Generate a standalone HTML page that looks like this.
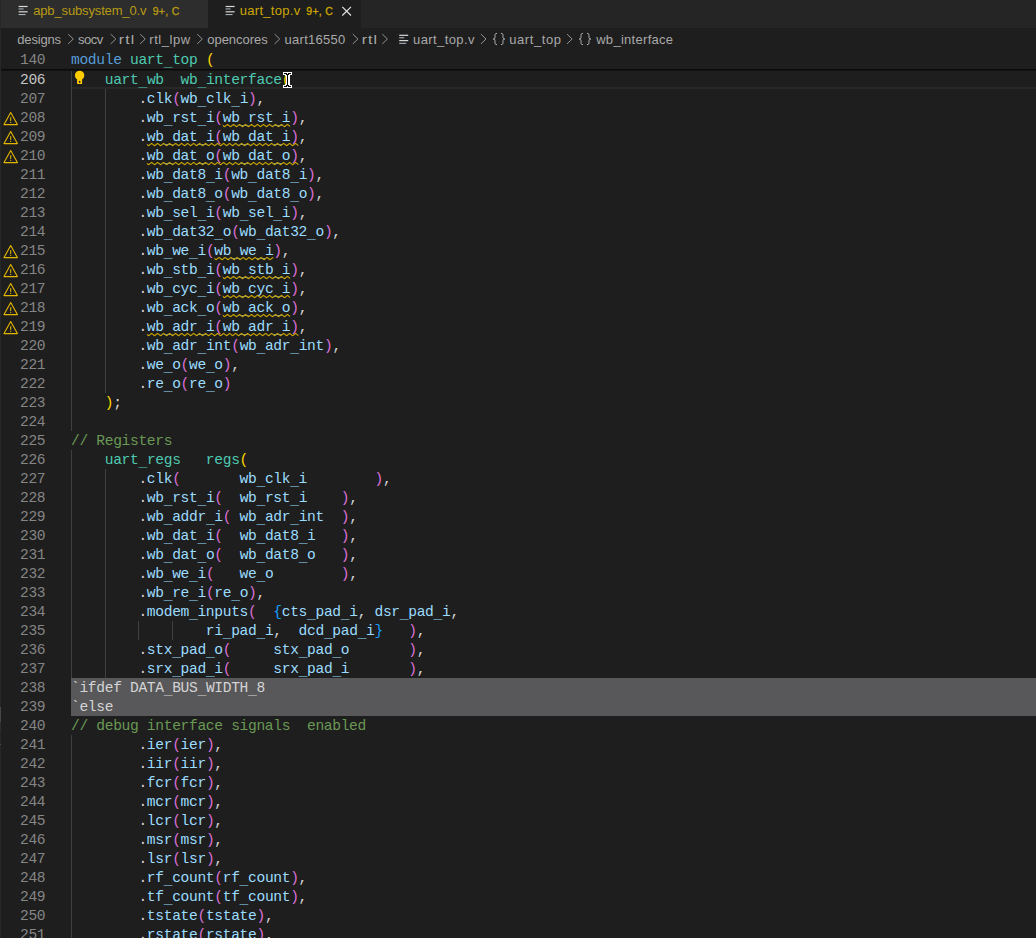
<!DOCTYPE html>
<html><head><meta charset="utf-8"><title>uart_top.v</title>
<style>
html,body{margin:0;padding:0;background:#1e1e1e;}
body{width:1036px;height:938px;overflow:hidden;position:relative;font-family:"Liberation Sans",sans-serif;}
.abs{position:absolute;}
.ui{font-family:"Liberation Sans",sans-serif;font-size:13px;white-space:pre;position:absolute;line-height:16px;}
.code{font-family:"Liberation Mono",monospace;font-size:14.6px;letter-spacing:-0.330px;white-space:pre;position:absolute;left:71px;height:19px;line-height:19px;color:#d4d4d4;}
.ln{font-family:"Liberation Mono",monospace;font-size:14.6px;letter-spacing:-0.330px;white-space:pre;position:absolute;left:0;width:45.3px;text-align:right;height:19px;line-height:19px;color:#858585;}
.g{position:absolute;width:1px;background:#404040;}
.code i{font-style:normal;position:relative;top:2px;}
</style></head><body>

<div class="abs" style="left:0;top:0;width:1036px;height:28px;background:#252526"></div>
<div class="abs" style="left:0;top:0;width:208px;height:28px;background:#2d2d2d"></div>
<div class="abs" style="left:208px;top:0;width:153px;height:28px;background:#1e1e1e"></div>
<div class="ui" style="left:33.20px;top:3px;font-size:13px;font-weight:normal;letter-spacing:-0.144px;color:#b79a14;">apb_subsystem_0.v</div>
<div class="ui" style="left:152.70px;top:3px;font-size:10.5px;font-weight:normal;letter-spacing:0.325px;color:#b79a14;-webkit-text-stroke:0.3px #b79a14;">9+, C</div>
<div class="ui" style="left:239.80px;top:3px;font-size:13px;font-weight:normal;letter-spacing:0.289px;color:#cca700;">uart_top.v</div>
<div class="ui" style="left:306.30px;top:3px;font-size:10.5px;font-weight:normal;letter-spacing:0.275px;color:#cca700;-webkit-text-stroke:0.3px #cca700;">9+, C</div>
<div class="ui" style="left:17.30px;top:32px;font-size:13px;font-weight:normal;letter-spacing:-0.183px;color:#a9a9a9;">designs</div>
<div class="ui" style="left:78.00px;top:32px;font-size:13px;font-weight:normal;letter-spacing:-0.467px;color:#a9a9a9;">socv</div>
<div class="ui" style="left:119.40px;top:32px;font-size:13px;font-weight:normal;letter-spacing:1.000px;color:#a9a9a9;transform:scaleX(1.200);transform-origin:1.00px 0;">rtl</div>
<div class="ui" style="left:149.30px;top:32px;font-size:13px;font-weight:normal;letter-spacing:0.533px;color:#a9a9a9;">rtl_lpw</div>
<div class="ui" style="left:207.30px;top:32px;font-size:13px;font-weight:normal;letter-spacing:-0.038px;color:#a9a9a9;">opencores</div>
<div class="ui" style="left:284.50px;top:32px;font-size:13px;font-weight:normal;letter-spacing:0.288px;color:#a9a9a9;">uart16550</div>
<div class="ui" style="left:361.70px;top:32px;font-size:13px;font-weight:normal;letter-spacing:0.917px;color:#a9a9a9;transform:scaleX(1.200);transform-origin:1.00px 0;">rtl</div>
<div class="ui" style="left:413.00px;top:32px;font-size:13px;font-weight:normal;letter-spacing:0.400px;color:#a9a9a9;">uart_top.v</div>
<div class="ui" style="left:509.20px;top:32px;font-size:13px;font-weight:normal;letter-spacing:0.586px;color:#a9a9a9;">uart_top</div>
<div class="ui" style="left:596.20px;top:32px;font-size:13px;font-weight:normal;letter-spacing:0.291px;color:#a9a9a9;">wb_interface</div>
<!--CRUMBS-->
<div class="ln" style="top:51px">140</div>
<div class="code" style="top:51px"><span style="color:#569cd6">module</span> <span style="color:#4ec9b0">uart<i>_</i>top</span> <span style="color:#ffd700">(</span></div>
<div class="abs" style="left:71px;top:70px;width:965px;height:19px;box-sizing:border-box;border-bottom:2px solid #282828"></div>
<div class="abs" style="left:71px;top:678px;width:965px;height:38px;background:#58585a"></div>
<div class="g" style="left:71px;top:70px;height:361px;background:#404040"></div>
<div class="g" style="left:105px;top:89px;height:304px;background:#404040"></div>
<div class="g" style="left:71px;top:450px;height:228px;background:#404040"></div>
<div class="g" style="left:105px;top:469px;height:209px;background:#404040"></div>
<div class="g" style="left:138px;top:621px;height:19px;background:#404040"></div>
<div class="g" style="left:172px;top:621px;height:19px;background:#404040"></div>
<div class="g" style="left:71px;top:735px;height:228px;background:#404040"></div>
<div class="ln" style="top:71px;color:#c6c6c6">206</div>
<div class="code" style="top:71px">    <span style="color:#4ec9b0">uart<i>_</i>wb  wb<i>_</i>interface</span><span style="color:#ffd700">(</span></div>
<div class="ln" style="top:90px;color:#858585">207</div>
<div class="code" style="top:90px">        <span style="color:#d4d4d4">.</span><span style="color:#9cdcfe">clk</span><span style="color:#da70d6">(</span><span style="color:#9cdcfe">wb<i>_</i>clk<i>_</i>i</span><span style="color:#da70d6">)</span><span style="color:#d4d4d4">,</span></div>
<div class="ln" style="top:109px;color:#858585">208</div>
<div class="code" style="top:109px">        <span style="color:#d4d4d4">.</span><span style="color:#9cdcfe">wb<i>_</i>rst<i>_</i>i</span><span style="color:#da70d6">(</span><span style="color:#9cdcfe">wb<i>_</i>rst<i>_</i>i</span><span style="color:#da70d6">)</span><span style="color:#d4d4d4">,</span></div>
<div class="ln" style="top:128px;color:#858585">209</div>
<div class="code" style="top:128px">        <span style="color:#d4d4d4">.</span><span style="color:#9cdcfe">wb<i>_</i>dat<i>_</i>i</span><span style="color:#da70d6">(</span><span style="color:#9cdcfe">wb<i>_</i>dat<i>_</i>i</span><span style="color:#da70d6">)</span><span style="color:#d4d4d4">,</span></div>
<div class="ln" style="top:147px;color:#858585">210</div>
<div class="code" style="top:147px">        <span style="color:#d4d4d4">.</span><span style="color:#9cdcfe">wb<i>_</i>dat<i>_</i>o</span><span style="color:#da70d6">(</span><span style="color:#9cdcfe">wb<i>_</i>dat<i>_</i>o</span><span style="color:#da70d6">)</span><span style="color:#d4d4d4">,</span></div>
<div class="ln" style="top:166px;color:#858585">211</div>
<div class="code" style="top:166px">        <span style="color:#d4d4d4">.</span><span style="color:#9cdcfe">wb<i>_</i>dat8<i>_</i>i</span><span style="color:#da70d6">(</span><span style="color:#9cdcfe">wb<i>_</i>dat8<i>_</i>i</span><span style="color:#da70d6">)</span><span style="color:#d4d4d4">,</span></div>
<div class="ln" style="top:185px;color:#858585">212</div>
<div class="code" style="top:185px">        <span style="color:#d4d4d4">.</span><span style="color:#9cdcfe">wb<i>_</i>dat8<i>_</i>o</span><span style="color:#da70d6">(</span><span style="color:#9cdcfe">wb<i>_</i>dat8<i>_</i>o</span><span style="color:#da70d6">)</span><span style="color:#d4d4d4">,</span></div>
<div class="ln" style="top:204px;color:#858585">213</div>
<div class="code" style="top:204px">        <span style="color:#d4d4d4">.</span><span style="color:#9cdcfe">wb<i>_</i>sel<i>_</i>i</span><span style="color:#da70d6">(</span><span style="color:#9cdcfe">wb<i>_</i>sel<i>_</i>i</span><span style="color:#da70d6">)</span><span style="color:#d4d4d4">,</span></div>
<div class="ln" style="top:223px;color:#858585">214</div>
<div class="code" style="top:223px">        <span style="color:#d4d4d4">.</span><span style="color:#9cdcfe">wb<i>_</i>dat32<i>_</i>o</span><span style="color:#da70d6">(</span><span style="color:#9cdcfe">wb<i>_</i>dat32<i>_</i>o</span><span style="color:#da70d6">)</span><span style="color:#d4d4d4">,</span></div>
<div class="ln" style="top:242px;color:#858585">215</div>
<div class="code" style="top:242px">        <span style="color:#d4d4d4">.</span><span style="color:#9cdcfe">wb<i>_</i>we<i>_</i>i</span><span style="color:#da70d6">(</span><span style="color:#9cdcfe">wb<i>_</i>we<i>_</i>i</span><span style="color:#da70d6">)</span><span style="color:#d4d4d4">,</span></div>
<div class="ln" style="top:261px;color:#858585">216</div>
<div class="code" style="top:261px">        <span style="color:#d4d4d4">.</span><span style="color:#9cdcfe">wb<i>_</i>stb<i>_</i>i</span><span style="color:#da70d6">(</span><span style="color:#9cdcfe">wb<i>_</i>stb<i>_</i>i</span><span style="color:#da70d6">)</span><span style="color:#d4d4d4">,</span></div>
<div class="ln" style="top:280px;color:#858585">217</div>
<div class="code" style="top:280px">        <span style="color:#d4d4d4">.</span><span style="color:#9cdcfe">wb<i>_</i>cyc<i>_</i>i</span><span style="color:#da70d6">(</span><span style="color:#9cdcfe">wb<i>_</i>cyc<i>_</i>i</span><span style="color:#da70d6">)</span><span style="color:#d4d4d4">,</span></div>
<div class="ln" style="top:299px;color:#858585">218</div>
<div class="code" style="top:299px">        <span style="color:#d4d4d4">.</span><span style="color:#9cdcfe">wb<i>_</i>ack<i>_</i>o</span><span style="color:#da70d6">(</span><span style="color:#9cdcfe">wb<i>_</i>ack<i>_</i>o</span><span style="color:#da70d6">)</span><span style="color:#d4d4d4">,</span></div>
<div class="ln" style="top:318px;color:#858585">219</div>
<div class="code" style="top:318px">        <span style="color:#d4d4d4">.</span><span style="color:#9cdcfe">wb<i>_</i>adr<i>_</i>i</span><span style="color:#da70d6">(</span><span style="color:#9cdcfe">wb<i>_</i>adr<i>_</i>i</span><span style="color:#da70d6">)</span><span style="color:#d4d4d4">,</span></div>
<div class="ln" style="top:337px;color:#858585">220</div>
<div class="code" style="top:337px">        <span style="color:#d4d4d4">.</span><span style="color:#9cdcfe">wb<i>_</i>adr<i>_</i>int</span><span style="color:#da70d6">(</span><span style="color:#9cdcfe">wb<i>_</i>adr<i>_</i>int</span><span style="color:#da70d6">)</span><span style="color:#d4d4d4">,</span></div>
<div class="ln" style="top:356px;color:#858585">221</div>
<div class="code" style="top:356px">        <span style="color:#d4d4d4">.</span><span style="color:#9cdcfe">we<i>_</i>o</span><span style="color:#da70d6">(</span><span style="color:#9cdcfe">we<i>_</i>o</span><span style="color:#da70d6">)</span><span style="color:#d4d4d4">,</span></div>
<div class="ln" style="top:375px;color:#858585">222</div>
<div class="code" style="top:375px">        <span style="color:#d4d4d4">.</span><span style="color:#9cdcfe">re<i>_</i>o</span><span style="color:#da70d6">(</span><span style="color:#9cdcfe">re<i>_</i>o</span><span style="color:#da70d6">)</span></div>
<div class="ln" style="top:394px;color:#858585">223</div>
<div class="code" style="top:394px">    <span style="color:#ffd700">)</span><span style="color:#d4d4d4">;</span></div>
<div class="ln" style="top:413px;color:#858585">224</div>
<div class="ln" style="top:432px;color:#858585">225</div>
<div class="code" style="top:432px"><span style="color:#6a9955">// Registers</span></div>
<div class="ln" style="top:451px;color:#858585">226</div>
<div class="code" style="top:451px">    <span style="color:#4ec9b0">uart<i>_</i>regs   regs</span><span style="color:#ffd700">(</span></div>
<div class="ln" style="top:470px;color:#858585">227</div>
<div class="code" style="top:470px">        <span style="color:#d4d4d4">.</span><span style="color:#9cdcfe">clk</span><span style="color:#da70d6">(       </span><span style="color:#9cdcfe">wb<i>_</i>clk<i>_</i>i        </span><span style="color:#da70d6">)</span><span style="color:#d4d4d4">,</span></div>
<div class="ln" style="top:489px;color:#858585">228</div>
<div class="code" style="top:489px">        <span style="color:#d4d4d4">.</span><span style="color:#9cdcfe">wb<i>_</i>rst<i>_</i>i</span><span style="color:#da70d6">(  </span><span style="color:#9cdcfe">wb<i>_</i>rst<i>_</i>i    </span><span style="color:#da70d6">)</span><span style="color:#d4d4d4">,</span></div>
<div class="ln" style="top:508px;color:#858585">229</div>
<div class="code" style="top:508px">        <span style="color:#d4d4d4">.</span><span style="color:#9cdcfe">wb<i>_</i>addr<i>_</i>i</span><span style="color:#da70d6">( </span><span style="color:#9cdcfe">wb<i>_</i>adr<i>_</i>int  </span><span style="color:#da70d6">)</span><span style="color:#d4d4d4">,</span></div>
<div class="ln" style="top:527px;color:#858585">230</div>
<div class="code" style="top:527px">        <span style="color:#d4d4d4">.</span><span style="color:#9cdcfe">wb<i>_</i>dat<i>_</i>i</span><span style="color:#da70d6">(  </span><span style="color:#9cdcfe">wb<i>_</i>dat8<i>_</i>i   </span><span style="color:#da70d6">)</span><span style="color:#d4d4d4">,</span></div>
<div class="ln" style="top:546px;color:#858585">231</div>
<div class="code" style="top:546px">        <span style="color:#d4d4d4">.</span><span style="color:#9cdcfe">wb<i>_</i>dat<i>_</i>o</span><span style="color:#da70d6">(  </span><span style="color:#9cdcfe">wb<i>_</i>dat8<i>_</i>o   </span><span style="color:#da70d6">)</span><span style="color:#d4d4d4">,</span></div>
<div class="ln" style="top:565px;color:#858585">232</div>
<div class="code" style="top:565px">        <span style="color:#d4d4d4">.</span><span style="color:#9cdcfe">wb<i>_</i>we<i>_</i>i</span><span style="color:#da70d6">(   </span><span style="color:#9cdcfe">we<i>_</i>o        </span><span style="color:#da70d6">)</span><span style="color:#d4d4d4">,</span></div>
<div class="ln" style="top:584px;color:#858585">233</div>
<div class="code" style="top:584px">        <span style="color:#d4d4d4">.</span><span style="color:#9cdcfe">wb<i>_</i>re<i>_</i>i</span><span style="color:#da70d6">(</span><span style="color:#9cdcfe">re<i>_</i>o</span><span style="color:#da70d6">)</span><span style="color:#d4d4d4">,</span></div>
<div class="ln" style="top:603px;color:#858585">234</div>
<div class="code" style="top:603px">        <span style="color:#d4d4d4">.</span><span style="color:#9cdcfe">modem<i>_</i>inputs</span><span style="color:#da70d6">(  </span><span style="color:#179fff">{</span><span style="color:#9cdcfe">cts<i>_</i>pad<i>_</i>i</span><span style="color:#d4d4d4">, </span><span style="color:#9cdcfe">dsr<i>_</i>pad<i>_</i>i</span><span style="color:#d4d4d4">,</span></div>
<div class="ln" style="top:622px;color:#858585">235</div>
<div class="code" style="top:622px">                <span style="color:#9cdcfe">ri<i>_</i>pad<i>_</i>i</span><span style="color:#d4d4d4">,  </span><span style="color:#9cdcfe">dcd<i>_</i>pad<i>_</i>i</span><span style="color:#179fff">}   </span><span style="color:#da70d6">)</span><span style="color:#d4d4d4">,</span></div>
<div class="ln" style="top:641px;color:#858585">236</div>
<div class="code" style="top:641px">        <span style="color:#d4d4d4">.</span><span style="color:#9cdcfe">stx<i>_</i>pad<i>_</i>o</span><span style="color:#da70d6">(     </span><span style="color:#9cdcfe">stx<i>_</i>pad<i>_</i>o       </span><span style="color:#da70d6">)</span><span style="color:#d4d4d4">,</span></div>
<div class="ln" style="top:660px;color:#858585">237</div>
<div class="code" style="top:660px">        <span style="color:#d4d4d4">.</span><span style="color:#9cdcfe">srx<i>_</i>pad<i>_</i>i</span><span style="color:#da70d6">(     </span><span style="color:#9cdcfe">srx<i>_</i>pad<i>_</i>i       </span><span style="color:#da70d6">)</span><span style="color:#d4d4d4">,</span></div>
<div class="ln" style="top:679px;color:#858585">238</div>
<div class="code" style="top:679px"><span style="color:#d4d4d4">`ifdef DATA<i>_</i>BUS<i>_</i>WIDTH<i>_</i>8</span></div>
<div class="ln" style="top:698px;color:#858585">239</div>
<div class="code" style="top:698px"><span style="color:#d4d4d4">`else</span></div>
<div class="ln" style="top:717px;color:#858585">240</div>
<div class="code" style="top:717px"><span style="color:#6a9955">// debug interface signals  enabled</span></div>
<div class="ln" style="top:736px;color:#858585">241</div>
<div class="code" style="top:736px">        <span style="color:#d4d4d4">.</span><span style="color:#9cdcfe">ier</span><span style="color:#da70d6">(</span><span style="color:#9cdcfe">ier</span><span style="color:#da70d6">)</span><span style="color:#d4d4d4">,</span></div>
<div class="ln" style="top:755px;color:#858585">242</div>
<div class="code" style="top:755px">        <span style="color:#d4d4d4">.</span><span style="color:#9cdcfe">iir</span><span style="color:#da70d6">(</span><span style="color:#9cdcfe">iir</span><span style="color:#da70d6">)</span><span style="color:#d4d4d4">,</span></div>
<div class="ln" style="top:774px;color:#858585">243</div>
<div class="code" style="top:774px">        <span style="color:#d4d4d4">.</span><span style="color:#9cdcfe">fcr</span><span style="color:#da70d6">(</span><span style="color:#9cdcfe">fcr</span><span style="color:#da70d6">)</span><span style="color:#d4d4d4">,</span></div>
<div class="ln" style="top:793px;color:#858585">244</div>
<div class="code" style="top:793px">        <span style="color:#d4d4d4">.</span><span style="color:#9cdcfe">mcr</span><span style="color:#da70d6">(</span><span style="color:#9cdcfe">mcr</span><span style="color:#da70d6">)</span><span style="color:#d4d4d4">,</span></div>
<div class="ln" style="top:812px;color:#858585">245</div>
<div class="code" style="top:812px">        <span style="color:#d4d4d4">.</span><span style="color:#9cdcfe">lcr</span><span style="color:#da70d6">(</span><span style="color:#9cdcfe">lcr</span><span style="color:#da70d6">)</span><span style="color:#d4d4d4">,</span></div>
<div class="ln" style="top:831px;color:#858585">246</div>
<div class="code" style="top:831px">        <span style="color:#d4d4d4">.</span><span style="color:#9cdcfe">msr</span><span style="color:#da70d6">(</span><span style="color:#9cdcfe">msr</span><span style="color:#da70d6">)</span><span style="color:#d4d4d4">,</span></div>
<div class="ln" style="top:850px;color:#858585">247</div>
<div class="code" style="top:850px">        <span style="color:#d4d4d4">.</span><span style="color:#9cdcfe">lsr</span><span style="color:#da70d6">(</span><span style="color:#9cdcfe">lsr</span><span style="color:#da70d6">)</span><span style="color:#d4d4d4">,</span></div>
<div class="ln" style="top:869px;color:#858585">248</div>
<div class="code" style="top:869px">        <span style="color:#d4d4d4">.</span><span style="color:#9cdcfe">rf<i>_</i>count</span><span style="color:#da70d6">(</span><span style="color:#9cdcfe">rf<i>_</i>count</span><span style="color:#da70d6">)</span><span style="color:#d4d4d4">,</span></div>
<div class="ln" style="top:888px;color:#858585">249</div>
<div class="code" style="top:888px">        <span style="color:#d4d4d4">.</span><span style="color:#9cdcfe">tf<i>_</i>count</span><span style="color:#da70d6">(</span><span style="color:#9cdcfe">tf<i>_</i>count</span><span style="color:#da70d6">)</span><span style="color:#d4d4d4">,</span></div>
<div class="ln" style="top:907px;color:#858585">250</div>
<div class="code" style="top:907px">        <span style="color:#d4d4d4">.</span><span style="color:#9cdcfe">tstate</span><span style="color:#da70d6">(</span><span style="color:#9cdcfe">tstate</span><span style="color:#da70d6">)</span><span style="color:#d4d4d4">,</span></div>
<div class="ln" style="top:926px;color:#858585">251</div>
<div class="code" style="top:926px">        <span style="color:#d4d4d4">.</span><span style="color:#9cdcfe">rstate</span><span style="color:#da70d6">(</span><span style="color:#9cdcfe">rstate</span><span style="color:#da70d6">)</span><span style="color:#d4d4d4">,</span></div>
<div class="abs" style="left:0;top:69px;width:1036px;height:1px;background:#0a0a0a"></div><div class="abs" style="left:0;top:70px;width:1036px;height:1px;background:#131313"></div>
<div class="abs" style="left:0;top:0;width:1px;height:938px;background:#272727"></div><div class="abs" style="left:0;top:707px;width:1px;height:15px;background:#474747"></div><div class="abs" style="left:0;top:722px;width:1px;height:9px;background:#2d2d2d"></div><div class="abs" style="left:0;top:744px;width:1px;height:1px;background:#484848"></div>
<svg class="abs" style="left:0;top:0" width="1036" height="938" viewBox="0 0 1036 938" shape-rendering="auto">
<clipPath id="c208"><rect x="0" y="-0.5" width="67.44" height="4"/></clipPath>
<g transform="translate(222.74,124)" clip-path="url(#c208)"><path d="M-1.25,0.35 L1.75,2.75 L4.75,0.35 L7.75,2.75 L10.75,0.35 L13.75,2.75 L16.75,0.35 L19.75,2.75 L22.75,0.35 L25.75,2.75 L28.75,0.35 L31.75,2.75 L34.75,0.35 L37.75,2.75 L40.75,0.35 L43.75,2.75 L46.75,0.35 L49.75,2.75 L52.75,0.35 L55.75,2.75 L58.75,0.35 L61.75,2.75 L64.75,0.35 L67.75,2.75" fill="none" stroke="#cca700" stroke-width="1.05"/></g>
<clipPath id="c209"><rect x="0" y="-0.5" width="151.74" height="4"/></clipPath>
<g transform="translate(146.87,143)" clip-path="url(#c209)"><path d="M-1.25,0.35 L1.75,2.75 L4.75,0.35 L7.75,2.75 L10.75,0.35 L13.75,2.75 L16.75,0.35 L19.75,2.75 L22.75,0.35 L25.75,2.75 L28.75,0.35 L31.75,2.75 L34.75,0.35 L37.75,2.75 L40.75,0.35 L43.75,2.75 L46.75,0.35 L49.75,2.75 L52.75,0.35 L55.75,2.75 L58.75,0.35 L61.75,2.75 L64.75,0.35 L67.75,2.75 L70.75,0.35 L73.75,2.75 L76.75,0.35 L79.75,2.75 L82.75,0.35 L85.75,2.75 L88.75,0.35 L91.75,2.75 L94.75,0.35 L97.75,2.75 L100.75,0.35 L103.75,2.75 L106.75,0.35 L109.75,2.75 L112.75,0.35 L115.75,2.75 L118.75,0.35 L121.75,2.75 L124.75,0.35 L127.75,2.75 L130.75,0.35 L133.75,2.75 L136.75,0.35 L139.75,2.75 L142.75,0.35 L145.75,2.75 L148.75,0.35 L151.75,2.75" fill="none" stroke="#cca700" stroke-width="1.05"/></g>
<clipPath id="c210"><rect x="0" y="-0.5" width="151.74" height="4"/></clipPath>
<g transform="translate(146.87,162)" clip-path="url(#c210)"><path d="M-1.25,0.35 L1.75,2.75 L4.75,0.35 L7.75,2.75 L10.75,0.35 L13.75,2.75 L16.75,0.35 L19.75,2.75 L22.75,0.35 L25.75,2.75 L28.75,0.35 L31.75,2.75 L34.75,0.35 L37.75,2.75 L40.75,0.35 L43.75,2.75 L46.75,0.35 L49.75,2.75 L52.75,0.35 L55.75,2.75 L58.75,0.35 L61.75,2.75 L64.75,0.35 L67.75,2.75 L70.75,0.35 L73.75,2.75 L76.75,0.35 L79.75,2.75 L82.75,0.35 L85.75,2.75 L88.75,0.35 L91.75,2.75 L94.75,0.35 L97.75,2.75 L100.75,0.35 L103.75,2.75 L106.75,0.35 L109.75,2.75 L112.75,0.35 L115.75,2.75 L118.75,0.35 L121.75,2.75 L124.75,0.35 L127.75,2.75 L130.75,0.35 L133.75,2.75 L136.75,0.35 L139.75,2.75 L142.75,0.35 L145.75,2.75 L148.75,0.35 L151.75,2.75" fill="none" stroke="#cca700" stroke-width="1.05"/></g>
<clipPath id="c215"><rect x="0" y="-0.5" width="59.01" height="4"/></clipPath>
<g transform="translate(214.31,257)" clip-path="url(#c215)"><path d="M-1.25,0.35 L1.75,2.75 L4.75,0.35 L7.75,2.75 L10.75,0.35 L13.75,2.75 L16.75,0.35 L19.75,2.75 L22.75,0.35 L25.75,2.75 L28.75,0.35 L31.75,2.75 L34.75,0.35 L37.75,2.75 L40.75,0.35 L43.75,2.75 L46.75,0.35 L49.75,2.75 L52.75,0.35 L55.75,2.75 L58.75,0.35 L61.75,2.75" fill="none" stroke="#cca700" stroke-width="1.05"/></g>
<clipPath id="c216"><rect x="0" y="-0.5" width="67.44" height="4"/></clipPath>
<g transform="translate(222.74,276)" clip-path="url(#c216)"><path d="M-1.25,0.35 L1.75,2.75 L4.75,0.35 L7.75,2.75 L10.75,0.35 L13.75,2.75 L16.75,0.35 L19.75,2.75 L22.75,0.35 L25.75,2.75 L28.75,0.35 L31.75,2.75 L34.75,0.35 L37.75,2.75 L40.75,0.35 L43.75,2.75 L46.75,0.35 L49.75,2.75 L52.75,0.35 L55.75,2.75 L58.75,0.35 L61.75,2.75 L64.75,0.35 L67.75,2.75" fill="none" stroke="#cca700" stroke-width="1.05"/></g>
<clipPath id="c217"><rect x="0" y="-0.5" width="67.44" height="4"/></clipPath>
<g transform="translate(222.74,295)" clip-path="url(#c217)"><path d="M-1.25,0.35 L1.75,2.75 L4.75,0.35 L7.75,2.75 L10.75,0.35 L13.75,2.75 L16.75,0.35 L19.75,2.75 L22.75,0.35 L25.75,2.75 L28.75,0.35 L31.75,2.75 L34.75,0.35 L37.75,2.75 L40.75,0.35 L43.75,2.75 L46.75,0.35 L49.75,2.75 L52.75,0.35 L55.75,2.75 L58.75,0.35 L61.75,2.75 L64.75,0.35 L67.75,2.75" fill="none" stroke="#cca700" stroke-width="1.05"/></g>
<clipPath id="c218"><rect x="0" y="-0.5" width="67.44" height="4"/></clipPath>
<g transform="translate(222.74,314)" clip-path="url(#c218)"><path d="M-1.25,0.35 L1.75,2.75 L4.75,0.35 L7.75,2.75 L10.75,0.35 L13.75,2.75 L16.75,0.35 L19.75,2.75 L22.75,0.35 L25.75,2.75 L28.75,0.35 L31.75,2.75 L34.75,0.35 L37.75,2.75 L40.75,0.35 L43.75,2.75 L46.75,0.35 L49.75,2.75 L52.75,0.35 L55.75,2.75 L58.75,0.35 L61.75,2.75 L64.75,0.35 L67.75,2.75" fill="none" stroke="#cca700" stroke-width="1.05"/></g>
<clipPath id="c219"><rect x="0" y="-0.5" width="151.74" height="4"/></clipPath>
<g transform="translate(146.87,333)" clip-path="url(#c219)"><path d="M-1.25,0.35 L1.75,2.75 L4.75,0.35 L7.75,2.75 L10.75,0.35 L13.75,2.75 L16.75,0.35 L19.75,2.75 L22.75,0.35 L25.75,2.75 L28.75,0.35 L31.75,2.75 L34.75,0.35 L37.75,2.75 L40.75,0.35 L43.75,2.75 L46.75,0.35 L49.75,2.75 L52.75,0.35 L55.75,2.75 L58.75,0.35 L61.75,2.75 L64.75,0.35 L67.75,2.75 L70.75,0.35 L73.75,2.75 L76.75,0.35 L79.75,2.75 L82.75,0.35 L85.75,2.75 L88.75,0.35 L91.75,2.75 L94.75,0.35 L97.75,2.75 L100.75,0.35 L103.75,2.75 L106.75,0.35 L109.75,2.75 L112.75,0.35 L115.75,2.75 L118.75,0.35 L121.75,2.75 L124.75,0.35 L127.75,2.75 L130.75,0.35 L133.75,2.75 L136.75,0.35 L139.75,2.75 L142.75,0.35 L145.75,2.75 L148.75,0.35 L151.75,2.75" fill="none" stroke="#cca700" stroke-width="1.05"/></g>
<g transform="translate(0,108)" fill="none" stroke="#e3b600" stroke-width="1.1" stroke-linejoin="round" stroke-linecap="round"><path d="M10.7,4.6 L17.4,16.6 L4.0,16.6 Z"/><path d="M10.7,9.4 L10.7,12.6" stroke-width="1.05"/><path d="M10.7,14.3 L10.7,14.5" stroke-width="1.1"/></g>
<g transform="translate(0,127)" fill="none" stroke="#e3b600" stroke-width="1.1" stroke-linejoin="round" stroke-linecap="round"><path d="M10.7,4.6 L17.4,16.6 L4.0,16.6 Z"/><path d="M10.7,9.4 L10.7,12.6" stroke-width="1.05"/><path d="M10.7,14.3 L10.7,14.5" stroke-width="1.1"/></g>
<g transform="translate(0,146)" fill="none" stroke="#e3b600" stroke-width="1.1" stroke-linejoin="round" stroke-linecap="round"><path d="M10.7,4.6 L17.4,16.6 L4.0,16.6 Z"/><path d="M10.7,9.4 L10.7,12.6" stroke-width="1.05"/><path d="M10.7,14.3 L10.7,14.5" stroke-width="1.1"/></g>
<g transform="translate(0,241)" fill="none" stroke="#e3b600" stroke-width="1.1" stroke-linejoin="round" stroke-linecap="round"><path d="M10.7,4.6 L17.4,16.6 L4.0,16.6 Z"/><path d="M10.7,9.4 L10.7,12.6" stroke-width="1.05"/><path d="M10.7,14.3 L10.7,14.5" stroke-width="1.1"/></g>
<g transform="translate(0,260)" fill="none" stroke="#e3b600" stroke-width="1.1" stroke-linejoin="round" stroke-linecap="round"><path d="M10.7,4.6 L17.4,16.6 L4.0,16.6 Z"/><path d="M10.7,9.4 L10.7,12.6" stroke-width="1.05"/><path d="M10.7,14.3 L10.7,14.5" stroke-width="1.1"/></g>
<g transform="translate(0,279)" fill="none" stroke="#e3b600" stroke-width="1.1" stroke-linejoin="round" stroke-linecap="round"><path d="M10.7,4.6 L17.4,16.6 L4.0,16.6 Z"/><path d="M10.7,9.4 L10.7,12.6" stroke-width="1.05"/><path d="M10.7,14.3 L10.7,14.5" stroke-width="1.1"/></g>
<g transform="translate(0,298)" fill="none" stroke="#e3b600" stroke-width="1.1" stroke-linejoin="round" stroke-linecap="round"><path d="M10.7,4.6 L17.4,16.6 L4.0,16.6 Z"/><path d="M10.7,9.4 L10.7,12.6" stroke-width="1.05"/><path d="M10.7,14.3 L10.7,14.5" stroke-width="1.1"/></g>
<g transform="translate(0,317)" fill="none" stroke="#e3b600" stroke-width="1.1" stroke-linejoin="round" stroke-linecap="round"><path d="M10.7,4.6 L17.4,16.6 L4.0,16.6 Z"/><path d="M10.7,9.4 L10.7,12.6" stroke-width="1.05"/><path d="M10.7,14.3 L10.7,14.5" stroke-width="1.1"/></g>
<g transform="translate(18.60,5.90)"><rect x="0" y="0" width="9" height="1.2" fill="#d8d8d8"/><rect x="0" y="2.5" width="5" height="1.1" fill="#a8b0b8"/><rect x="0" y="5.3" width="9" height="1.2" fill="#d8d8d8"/><rect x="0" y="8.1" width="7" height="1.1" fill="#a8b0b8"/></g>
<g transform="translate(225.60,5.90)"><rect x="0" y="0" width="9" height="1.2" fill="#d8d8d8"/><rect x="0" y="2.5" width="5" height="1.1" fill="#a8b0b8"/><rect x="0" y="5.3" width="9" height="1.2" fill="#d8d8d8"/><rect x="0" y="8.1" width="7" height="1.1" fill="#a8b0b8"/></g>
<g transform="translate(399.20,34.70)"><rect x="0" y="0" width="9" height="1.2" fill="#d8d8d8"/><rect x="0" y="2.5" width="5" height="1.1" fill="#a8b0b8"/><rect x="0" y="5.3" width="9" height="1.2" fill="#d8d8d8"/><rect x="0" y="8.1" width="7" height="1.1" fill="#a8b0b8"/></g>
<path d="M342.3,6.8 L351,15.5 M351,6.8 L342.3,15.5" stroke="#e8e8e8" stroke-width="1.1" fill="none"/>
<path d="M68.20,34.1 L73.30,39 L68.20,43.9" stroke="#939393" stroke-width="1.0" fill="none"/>
<path d="M110.70,34.1 L115.80,39 L110.70,43.9" stroke="#939393" stroke-width="1.0" fill="none"/>
<path d="M140.20,34.1 L145.30,39 L140.20,43.9" stroke="#939393" stroke-width="1.0" fill="none"/>
<path d="M197.20,34.1 L202.30,39 L197.20,43.9" stroke="#939393" stroke-width="1.0" fill="none"/>
<path d="M274.60,34.1 L279.70,39 L274.60,43.9" stroke="#939393" stroke-width="1.0" fill="none"/>
<path d="M352.80,34.1 L357.90,39 L352.80,43.9" stroke="#939393" stroke-width="1.0" fill="none"/>
<path d="M382.30,34.1 L387.40,39 L382.30,43.9" stroke="#939393" stroke-width="1.0" fill="none"/>
<path d="M480.90,34.1 L486.00,39 L480.90,43.9" stroke="#939393" stroke-width="1.0" fill="none"/>
<path d="M567.00,34.1 L572.10,39 L567.00,43.9" stroke="#939393" stroke-width="1.0" fill="none"/>
<g transform="translate(492.80,0)" stroke="#b8b8b8" stroke-width="0.95" fill="none"><path d="M4.2,33.4 C2.6,33.4 2.2,34 2.2,35.4 L2.2,37.4 C2.2,38.5 1.6,39 0.4,39 C1.6,39 2.2,39.5 2.2,40.6 L2.2,42.6 C2.2,44 2.6,44.6 4.2,44.6"/><path d="M8.2,33.4 C9.8,33.4 10.2,34 10.2,35.4 L10.2,37.4 C10.2,38.5 10.8,39 12,39 C10.8,39 10.2,39.5 10.2,40.6 L10.2,42.6 C10.2,44 9.8,44.6 8.2,44.6"/></g>
<g transform="translate(578.80,0)" stroke="#b8b8b8" stroke-width="0.95" fill="none"><path d="M4.2,33.4 C2.6,33.4 2.2,34 2.2,35.4 L2.2,37.4 C2.2,38.5 1.6,39 0.4,39 C1.6,39 2.2,39.5 2.2,40.6 L2.2,42.6 C2.2,44 2.6,44.6 4.2,44.6"/><path d="M8.2,33.4 C9.8,33.4 10.2,34 10.2,35.4 L10.2,37.4 C10.2,38.5 10.8,39 12,39 C10.8,39 10.2,39.5 10.2,40.6 L10.2,42.6 C10.2,44 9.8,44.6 8.2,44.6"/></g>
<g fill="#ffcc00"><circle cx="79.6" cy="75.4" r="4.7"/><path d="M77.1,78 L82.1,78 L82.1,83.2 Q82.1,84.1 81.2,84.1 L78,84.1 Q77.1,84.1 77.1,83.2 Z"/></g>
<rect x="78.9" y="80.9" width="1.5" height="1.9" fill="#1e1e1e"/>
<g shape-rendering="crispEdges"><path d="M283,72 H292 V75 H290 V76 H289.5 V84 H290 V85 H292 V88 H283 V85 H285 V84 H286 V76 H285 V75 H283 Z" fill="#ffffff"/><rect x="284" y="73" width="7" height="1" fill="#000"/><rect x="287" y="73" width="1" height="1" fill="#fff"/><rect x="286" y="74" width="3" height="1" fill="#000"/><rect x="287" y="75" width="1" height="10" fill="#000"/><rect x="286" y="85" width="3" height="1" fill="#000"/><rect x="284" y="86" width="7" height="1" fill="#000"/><rect x="287" y="86" width="1" height="1" fill="#fff"/></g>
</svg>
</body></html>
